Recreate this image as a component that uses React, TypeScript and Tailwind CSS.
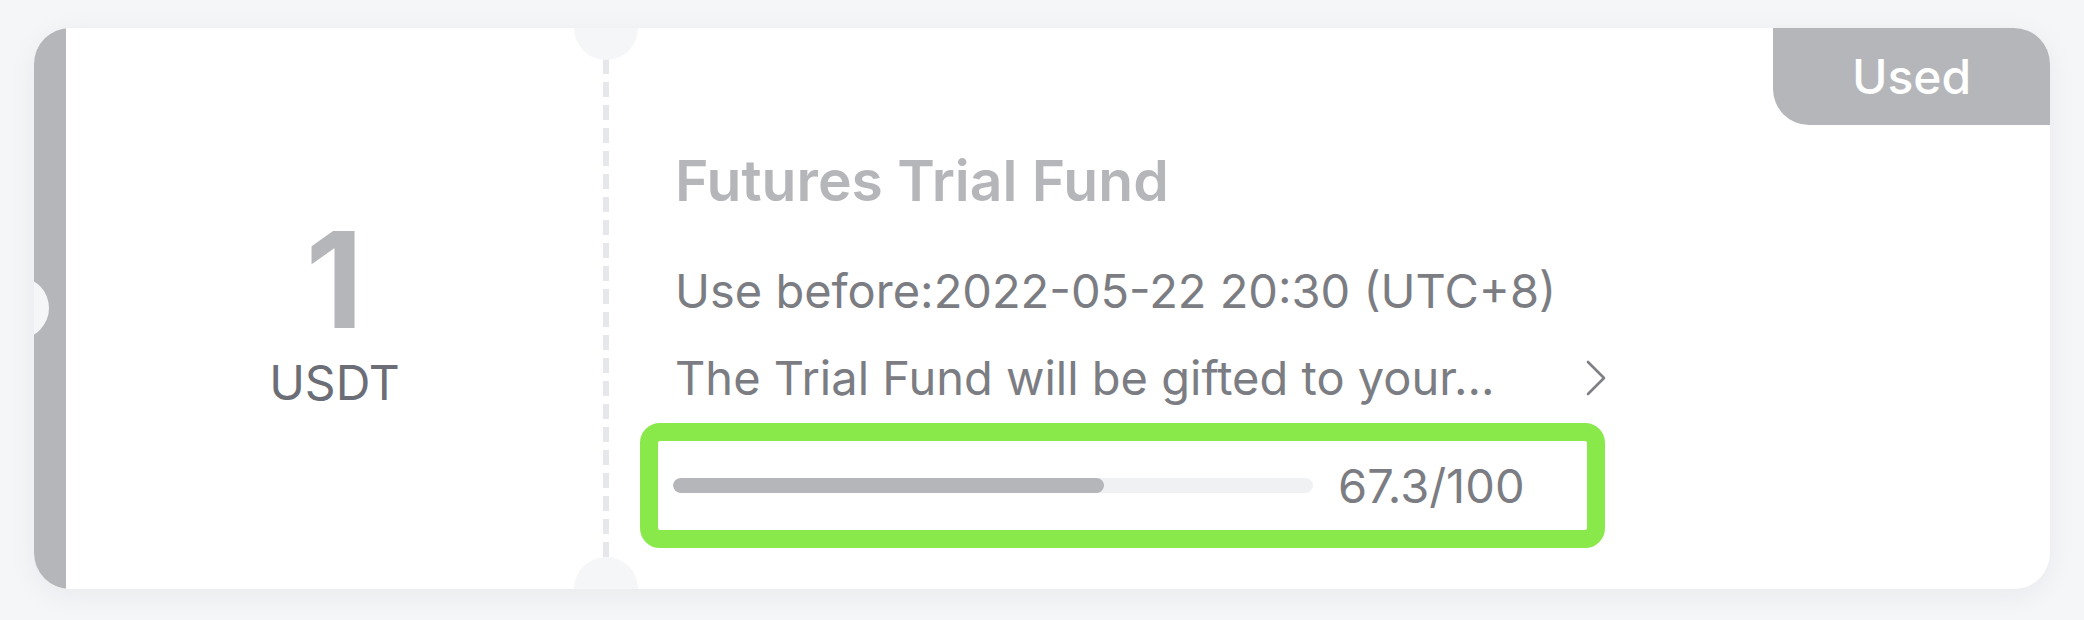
export default function App() {
  return (
    <div className="min-h-screen bg-[#f5f6f8] pl-[34px] pt-[28px] font-['Inter','Liberation_Sans',sans-serif]">
      <div className="relative flex h-[561px] w-[2016px] overflow-hidden rounded-[36px] bg-white shadow-[0_6px_28px_rgba(30,35,50,0.06)]">
        {/* gray strip */}
        <div className="w-[32px] bg-[#b5b6ba]" />

        {/* amount */}
        <div className="flex w-[537px] flex-col items-center pt-[184px]">
          <div className="h-[134px] text-[134px] font-bold leading-[134px] text-[#b5b6ba]">1</div>
          <div className="mt-[13px] text-[48px] leading-[48px] text-[#6b6e76]">USDT</div>
        </div>

        {/* dashed divider */}
        <div className="my-[31px] w-[6px] bg-[repeating-linear-gradient(to_bottom,#e6e7ea_0_15px,transparent_15px_23px)]" />

        {/* details */}
        <div className="flex flex-1 flex-col pl-[66px] pt-[119px]">
          <div className="h-[68px] text-[57px] font-semibold leading-[68px] text-[#b5b6ba]">Futures Trial Fund</div>
          <div className="mt-[46px] h-[60px] text-[47px] leading-[60px] text-[#7b7d83]">
            Use before:2022-05-22 20:30 (UTC+8)
          </div>
          <div className="mt-[27px] flex h-[60px] w-[930px] items-center justify-between text-[47px] leading-[60px] text-[#7b7d83]">
            <span>The Trial Fund will be gifted to your...</span>
            <svg width="20" height="36" viewBox="0 0 20 36" fill="none" className="mr-[-1px]">
              <path d="M2 2 L18 18 L2 34" stroke="#7e8086" strokeWidth="2.6" strokeLinecap="round" strokeLinejoin="round" />
            </svg>
          </div>
          <div className="ml-[-35px] mt-[15px] flex h-[125px] w-[965px] items-center rounded-[20px] border-[18px] border-[#89e94a] pl-[15px]">
            <div className="h-[15px] w-[640px] overflow-hidden rounded-full bg-[#f0f1f3]">
              <div className="h-full w-[67.3%] rounded-full bg-[#b5b6ba]" />
            </div>
            <div className="ml-[25px] text-[47px] leading-[60px] text-[#7b7d83]">67.3/100</div>
          </div>
        </div>

        {/* notches */}
        <div className="absolute left-[-47px] top-[249px] h-[62px] w-[62px] rounded-full bg-[#f5f6f8]" />
        <div className="absolute left-[540px] top-[-32px] h-[64px] w-[64px] rounded-full bg-[#f5f6f8]" />
        <div className="absolute bottom-[-32px] left-[540px] h-[64px] w-[64px] rounded-full bg-[#f5f6f8]" />

        {/* status badge */}
        <div className="absolute right-0 top-0 flex h-[97px] w-[277px] items-center justify-center rounded-bl-[36px] bg-[#b5b6ba] text-[48px] font-medium text-white">
          Used
        </div>
      </div>
    </div>
  );
}
